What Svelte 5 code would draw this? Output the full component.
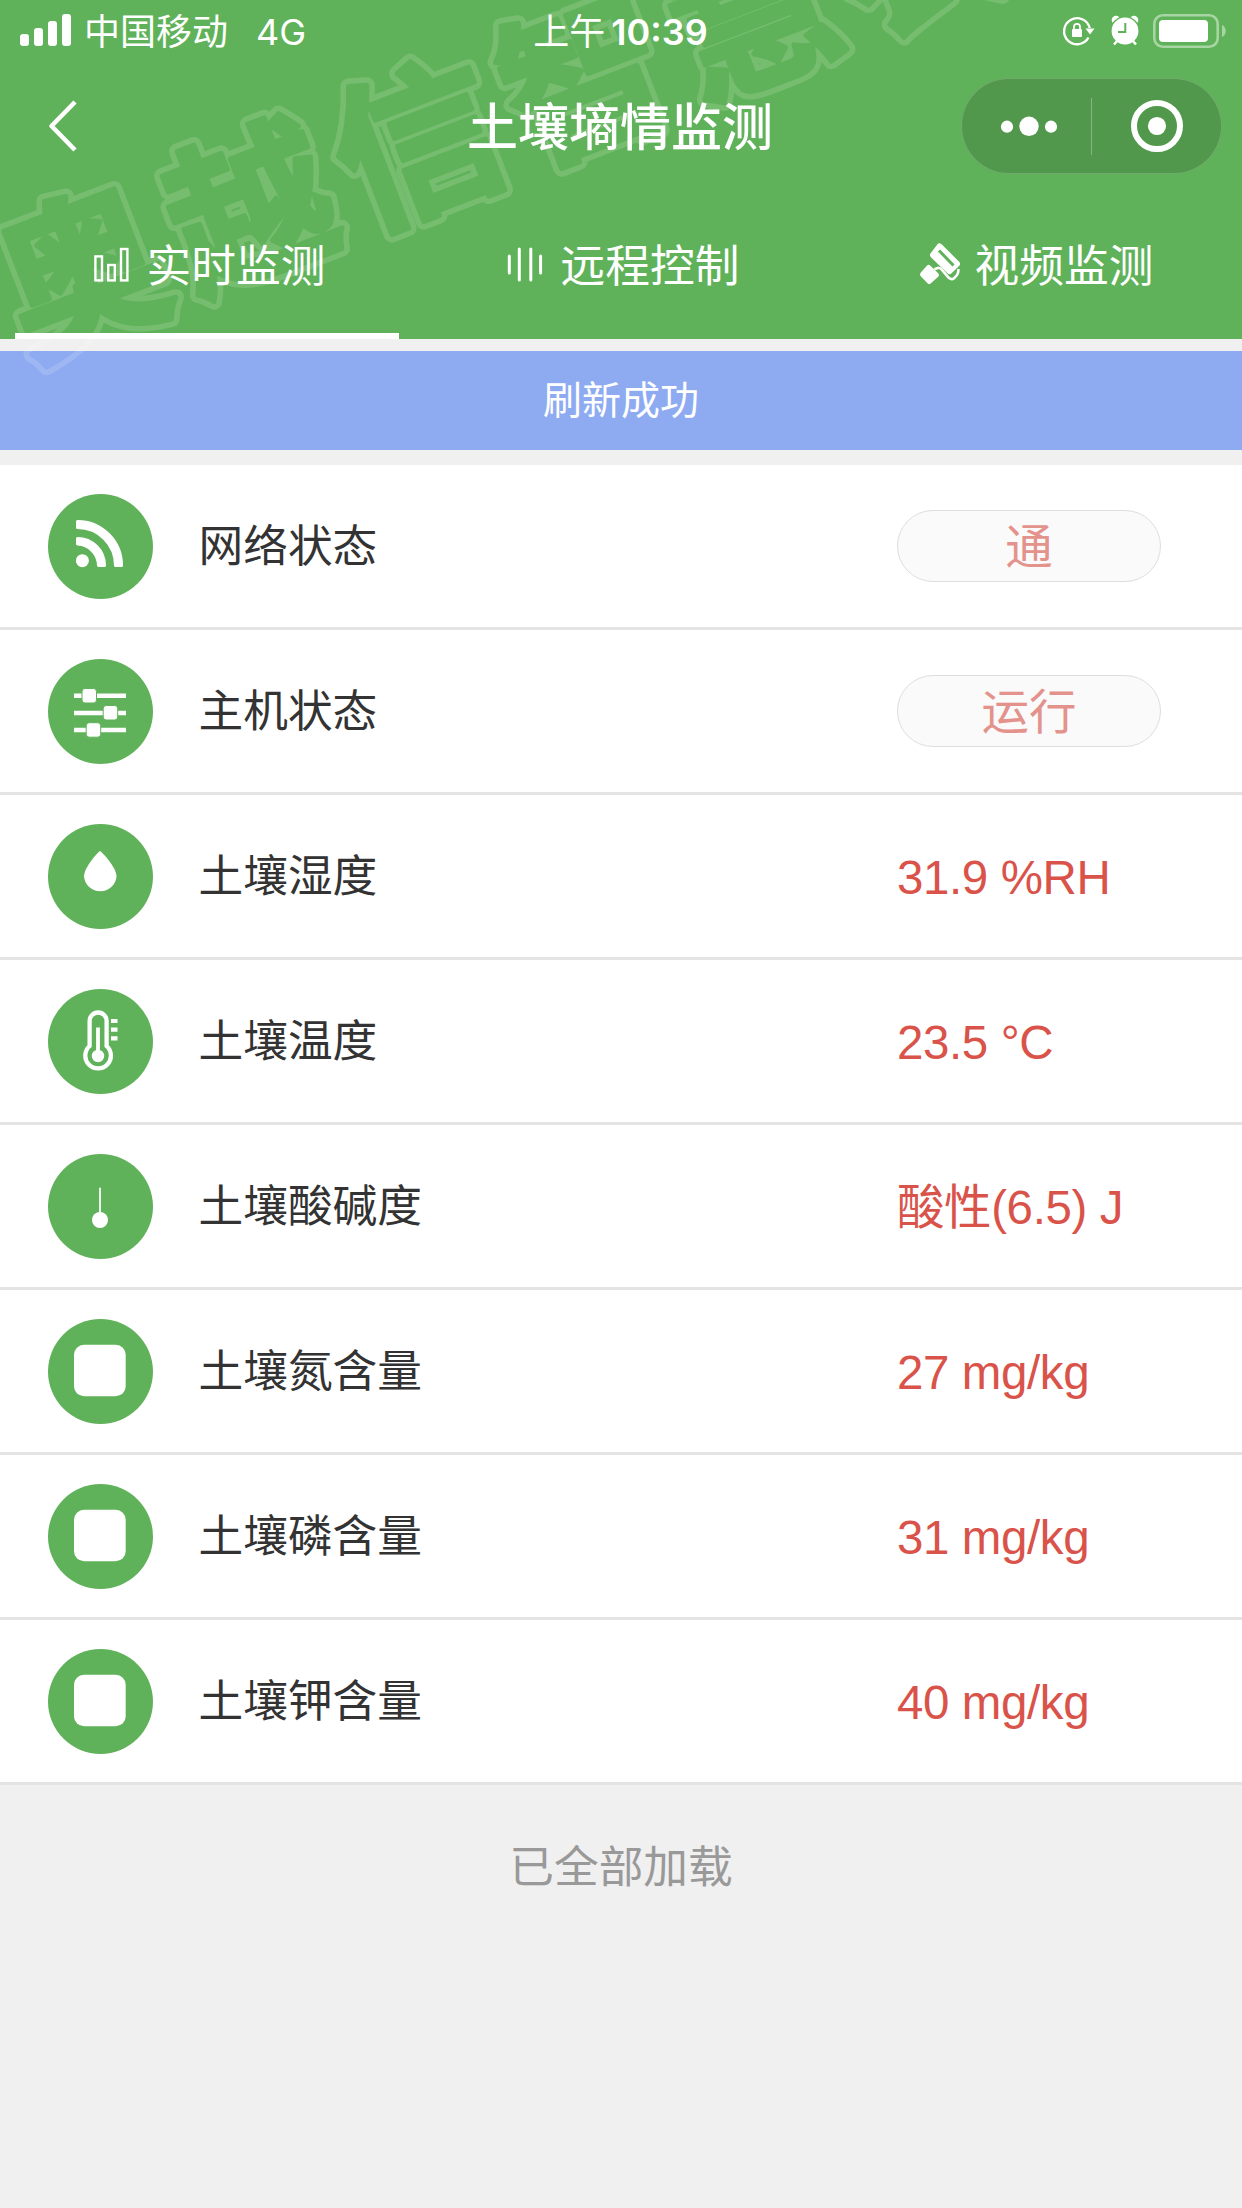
<script lang="ts">
    interface Row {
        icon: string;
        label: string;
        value: string;
        button?: boolean;
    }

    const tabs = [
        { id: 'realtime', title: '实时监测' },
        { id: 'remote', title: '远程控制' },
        { id: 'video', title: '视频监测' },
    ];

    const rows: Row[] = [
        { icon: 'rss', label: '网络状态', value: '通', button: true },
        { icon: 'sliders', label: '主机状态', value: '运行', button: true },
        { icon: 'drop', label: '土壤湿度', value: '31.9 %RH' },
        { icon: 'thermometer', label: '土壤温度', value: '23.5 °C' },
        { icon: 'ph', label: '土壤酸碱度', value: '酸性(6.5) J' },
        { icon: 'square', label: '土壤氮含量', value: '27 mg/kg' },
        { icon: 'square', label: '土壤磷含量', value: '31 mg/kg' },
        { icon: 'square', label: '土壤钾含量', value: '40 mg/kg' },
    ];

    let activeTab = $state('realtime');
</script>

<div class="page">
    <header class="header">
        <div class="status-bar">
            <div class="status-left">
                <svg class="signal" width="51" height="32" viewBox="0 0 51 32" fill="#fff">
                    <rect x="0" y="20" width="9" height="12" rx="3" />
                    <rect x="14" y="14" width="9" height="18" rx="3" />
                    <rect x="28" y="7" width="9" height="25" rx="3" />
                    <rect x="42" y="0" width="9" height="32" rx="3" />
                </svg>
                <span class="carrier">中国移动</span>
                <span class="network">4G</span>
            </div>
            <div class="status-time"><span>上午</span><b>10:39</b></div>
            <div class="status-right">
                <svg width="33" height="32" viewBox="0 0 33 32">
                    <path d="M26.5 22.5A13 13 0 1 1 27.7 13" fill="none" stroke="#fff" stroke-width="2.4" />
                    <path d="M23.5 13.5h9l-4.5 6z" fill="#fff" />
                    <rect x="10" y="14" width="10" height="8" rx="1" fill="#fff" />
                    <path d="M12 14.5v-2.7a3 3 0 0 1 6 0v2.7" fill="none" stroke="#fff" stroke-width="1.8" />
                </svg>
                <svg width="28" height="32" viewBox="0 0 28 32">
                    <circle cx="5" cy="5" r="4.3" fill="#fff" />
                    <circle cx="23" cy="5" r="4.3" fill="#fff" />
                    <circle cx="14" cy="16" r="14.8" fill="#5fb259" />
                    <path d="M7 25l-4 4.5M21 25l4 4.5" stroke="#fff" stroke-width="2.6" />
                    <circle cx="14" cy="16" r="13.4" fill="#fff" />
                    <path d="M14.3 8v9H7" fill="none" stroke="#5fb259" stroke-width="2" />
                </svg>
                <svg class="battery" width="73" height="34" viewBox="0 0 73 34">
                    <rect x="1.3" y="1.3" width="63.4" height="31.4" rx="8.5" fill="none" stroke="#fff" stroke-opacity=".45" stroke-width="2.6" />
                    <rect x="6" y="6" width="49" height="22" rx="4" fill="#fff" />
                    <path d="M69 11c5 2 5 10 0 12z" fill="#fff" fill-opacity=".45" />
                </svg>
            </div>
        </div>

        <div class="nav">
            <svg class="back" width="30" height="54" viewBox="0 0 30 54" fill="none" stroke="#fff" stroke-width="4.6">
                <path d="M27 3L3.5 27L27 51" stroke-linejoin="round" />
            </svg>
            <h1 class="title">土壤墒情监测</h1>
            <div class="capsule">
                <svg width="261" height="96" viewBox="0 0 261 96" fill="#fff">
                    <circle cx="46" cy="48.7" r="6.1" />
                    <circle cx="68" cy="48.3" r="9.7" />
                    <circle cx="90" cy="48.7" r="6.1" />
                    <rect x="130" y="20" width="1" height="57" fill-opacity=".3" />
                    <circle cx="196" cy="48" r="23" fill="none" stroke="#fff" stroke-width="6" />
                    <circle cx="196" cy="48" r="9.1" />
                </svg>
            </div>
        </div>

        <nav class="tabs">
            {#each tabs as tab}
                <button class="tab" class:active={tab.id === activeTab} onclick={() => (activeTab = tab.id)}>
                    <svg width="45" height="45" viewBox="0 0 45 45">
                        {#if tab.id === 'realtime'}
                            <g fill="none" stroke="#fff" stroke-width="2.4">
                                <rect x="6.4" y="13.4" width="6.6" height="24" />
                                <rect x="19.2" y="22" width="6.6" height="15.4" />
                                <rect x="32" y="6" width="6.4" height="31.4" />
                            </g>
                        {:else if tab.id === 'remote'}
                            <path d="M6.3 13v17M16.3 6v31M27.8 6v31M37.6 13v17" stroke="#fff" stroke-width="3" stroke-linecap="round" />
                        {:else}
                            <path d="M22.5 3.5L40 20.8L32.5 28L16 12z" fill="#fff" stroke="#fff" stroke-width="6" stroke-linejoin="round" />
                            <path d="M22 7.5L36.5 22.5" stroke="#5fb259" stroke-width="3" />
                            <path d="M11.7 24.5L19.5 32L12.3 38.5L5.5 31.5z" fill="#fff" stroke="#fff" stroke-width="5" stroke-linejoin="round" />
                            <path d="M17.3 26.3l4-1.5q2 0 3.5 2l7 8q2.7 2.500 5.200.5l3-3.300q1.500-2 1.500-6" fill="none" stroke="#fff" stroke-width="2.6" />
                        {/if}
                    </svg>
                    <span>{tab.title}</span>
                </button>
            {/each}
        </nav>
    </header>

    <div class="toast">刷新成功</div>

    <ul class="list">
        {#each rows as row}
            <li class="row">
                <svg class="row-icon" width="105" height="105" viewBox="0 0 105 105">
                    <circle cx="52.5" cy="52.5" r="52.5" fill="#5fb259" />
                    {#if row.icon === 'rss'}
                        <circle cx="34.4" cy="66.7" r="6.5" fill="#fff" />
                        <path d="M29.5 44.5v5.5A22 22 0 0 1 50.5 71.5h6A27 27 0 0 0 29.5 44.5zM29.5 27.5v6A38 38 0 0 1 67.5 71.5h6A44 44 0 0 0 29.5 27.5z" fill="#fff" stroke="#fff" stroke-width="3" stroke-linejoin="round" />
                    {:else if row.icon === 'sliders'}
                        <path d="M26 36.7h52M26 54h52M26 71h52" stroke="#fff" stroke-width="4.5" />
                        <g fill="#fff" stroke="#5fb259">
                            <rect x="34" y="29.5" width="14.5" height="14.5" rx="3" />
                            <rect x="55.2" y="46.5" width="14.5" height="14.5" rx="3" />
                            <rect x="38.2" y="63.7" width="14.5" height="14.5" rx="3" />
                        </g>
                    {:else if row.icon === 'drop'}
                        <path d="M52 27C53 27 68.5 43 68.5 52.5A16.3 16 0 0 1 36 52.5C36 43 51 27 52 27z" fill="#fff" />
                    {:else if row.icon === 'thermometer'}
                        <path d="M41.6 57V32a8.5 8.5 0 0 1 17 0v25a12.8 12.8 0 1 1-17 0z" fill="none" stroke="#fff" stroke-width="4.3" />
                        <path d="M50 38.5V66" stroke="#fff" stroke-width="3.8" />
                        <circle cx="50" cy="67" r="6.2" fill="#fff" />
                        <path d="M63 32h6.5M63 40.7h6.5M63 49.3h6.5" stroke="#fff" stroke-width="4.2" />
                    {:else if row.icon === 'ph'}
                        <path d="M52 33.7V62" stroke="#fff" stroke-width="1.8" />
                        <circle cx="52" cy="66" r="8" fill="#fff" />
                    {:else}
                        <rect x="26" y="25.7" width="51.7" height="51.6" rx="10" fill="#fff" />
                    {/if}
                </svg>
                <span class="label">{row.label}</span>
                {#if row.button}
                    <button class="pill">{row.value}</button>
                {:else}
                    <span class="value">{row.value}</span>
                {/if}
            </li>
        {/each}
    </ul>

    <div class="load-end">已全部加载</div>

    <!-- outlined brand watermark lying over the top of the page -->
    <svg class="watermark" width="1242" height="400" viewBox="0 0 1242 400" aria-hidden="true">
        <defs>
            <text id="brand" class="brand" transform="translate(28 358) rotate(-21)">奥越信智慧农业</text>
            <mask id="hollow" maskUnits="userSpaceOnUse" x="0" y="0" width="1242" height="400">
                <rect width="1242" height="400" fill="#fff" />
                <use href="#brand" fill="#000" stroke="#000" stroke-width="5" />
            </mask>
        </defs>
        <use href="#brand" fill="#fff" stroke="#fff" stroke-width="16" mask="url(#hollow)" />
    </svg>
</div>

<style>
    :global(body) {
        margin: 0;
        background: #f0f0f0;
    }

    .page {
        position: relative;
        width: 1242px;
        height: 2208px;
        overflow: hidden;
        background: #f0f0f0;
        font-family: 'Liberation Sans', 'Noto Sans CJK SC', sans-serif;
    }

    svg {
        display: block;
        flex-shrink: 0;
    }

    button {
        border: 0;
        padding: 0;
        background: none;
        font-family: inherit;
        cursor: pointer;
    }

    .header {
        display: flex;
        flex-direction: column;
        height: 339px;
        background: #5fb259;
        color: #fff;
    }

    .status-bar {
        display: grid;
        grid-template-columns: 1fr auto 1fr;
        align-items: center;
        height: 60px;
        padding: 0 16px 0 20px;
        font-family: Inter, 'Noto Sans CJK SC', sans-serif;
        font-size: 36px;
        line-height: 60px;
    }

    .status-left,
    .status-right {
        display: flex;
        align-items: center;
    }

    .signal {
        margin-bottom: 3px;
    }

    .carrier {
        margin-left: 13px;
        padding-top: 2px;
    }

    .network {
        margin-left: 28px;
        padding-top: 2px;
    }

    .status-time {
        display: flex;
        gap: 6px;
        padding: 2px 5px 0 0;
    }

    .status-time b {
        font-weight: 600;
    }

    .status-right {
        justify-content: flex-end;
        gap: 16px;
    }

    .battery {
        margin-left: -2px;
    }

    .nav {
        display: grid;
        grid-template-columns: 1fr auto 1fr;
        align-items: center;
        height: 132px;
        padding: 0 20px 0 48px;
    }

    .title {
        margin: 0;
        padding: 5px 30px 0 0;
        font-size: 51px;
        font-weight: 500;
        line-height: 72px;
    }

    .capsule {
        justify-self: end;
        width: 261px;
        height: 96px;
        border-radius: 48px;
        background: rgba(0, 0, 0, 0.14);
        box-shadow: inset 0 0 0 1px rgba(255, 255, 255, 0.18);
    }

    .tabs {
        display: grid;
        grid-template-columns: repeat(3, 1fr);
        flex: 1;
    }

    .tab {
        display: flex;
        align-items: center;
        justify-content: center;
        gap: 13px;
        color: #fff;
        font-size: 44.7px;
        line-height: 60px;
    }

    .tab span {
        padding-top: 3px;
    }

    .tab.active {
        background: linear-gradient(#fff, #fff) 15px 100% / 384px 6px no-repeat;
    }

    .toast {
        height: 99px;
        margin: 12px 0 15px;
        background: #8eabf1;
        color: #fff;
        font-size: 39px;
        line-height: 99px;
        text-align: center;
    }

    .list {
        margin: 0;
        padding: 0;
        list-style: none;
        background: #fff;
    }

    .row {
        display: grid;
        grid-template-columns: 150.5px 698.5px 264px;
        align-items: center;
        height: 162px;
        padding-left: 48px;
        border-bottom: 3px solid #e4e4e4;
    }

    .label {
        padding-top: 2px;
        color: #333;
        font-size: 44.7px;
        line-height: 60px;
    }

    .value {
        padding-top: 3px;
        color: #d9534a;
        font-size: 47.5px;
        letter-spacing: -0.4px;
        line-height: 60px;
        white-space: nowrap;
    }

    .pill {
        height: 72px;
        padding-top: 4px;
        border: 1px solid #dedede;
        border-radius: 36px;
        background: #fafafa;
        color: #e3928c;
        font-size: 47.5px;
        line-height: 66px;
    }

    .load-end {
        padding-top: 2px;
        color: #999;
        font-size: 44.7px;
        line-height: 162px;
        text-align: center;
    }

    .watermark {
        position: absolute;
        top: 0;
        left: 0;
        opacity: 0.14;
        pointer-events: none;
    }

    .brand {
        font-family: 'Noto Sans CJK SC', sans-serif;
        font-size: 164px;
        font-weight: 700;
        letter-spacing: 15px;
        stroke-linejoin: round;
    }
</style>
